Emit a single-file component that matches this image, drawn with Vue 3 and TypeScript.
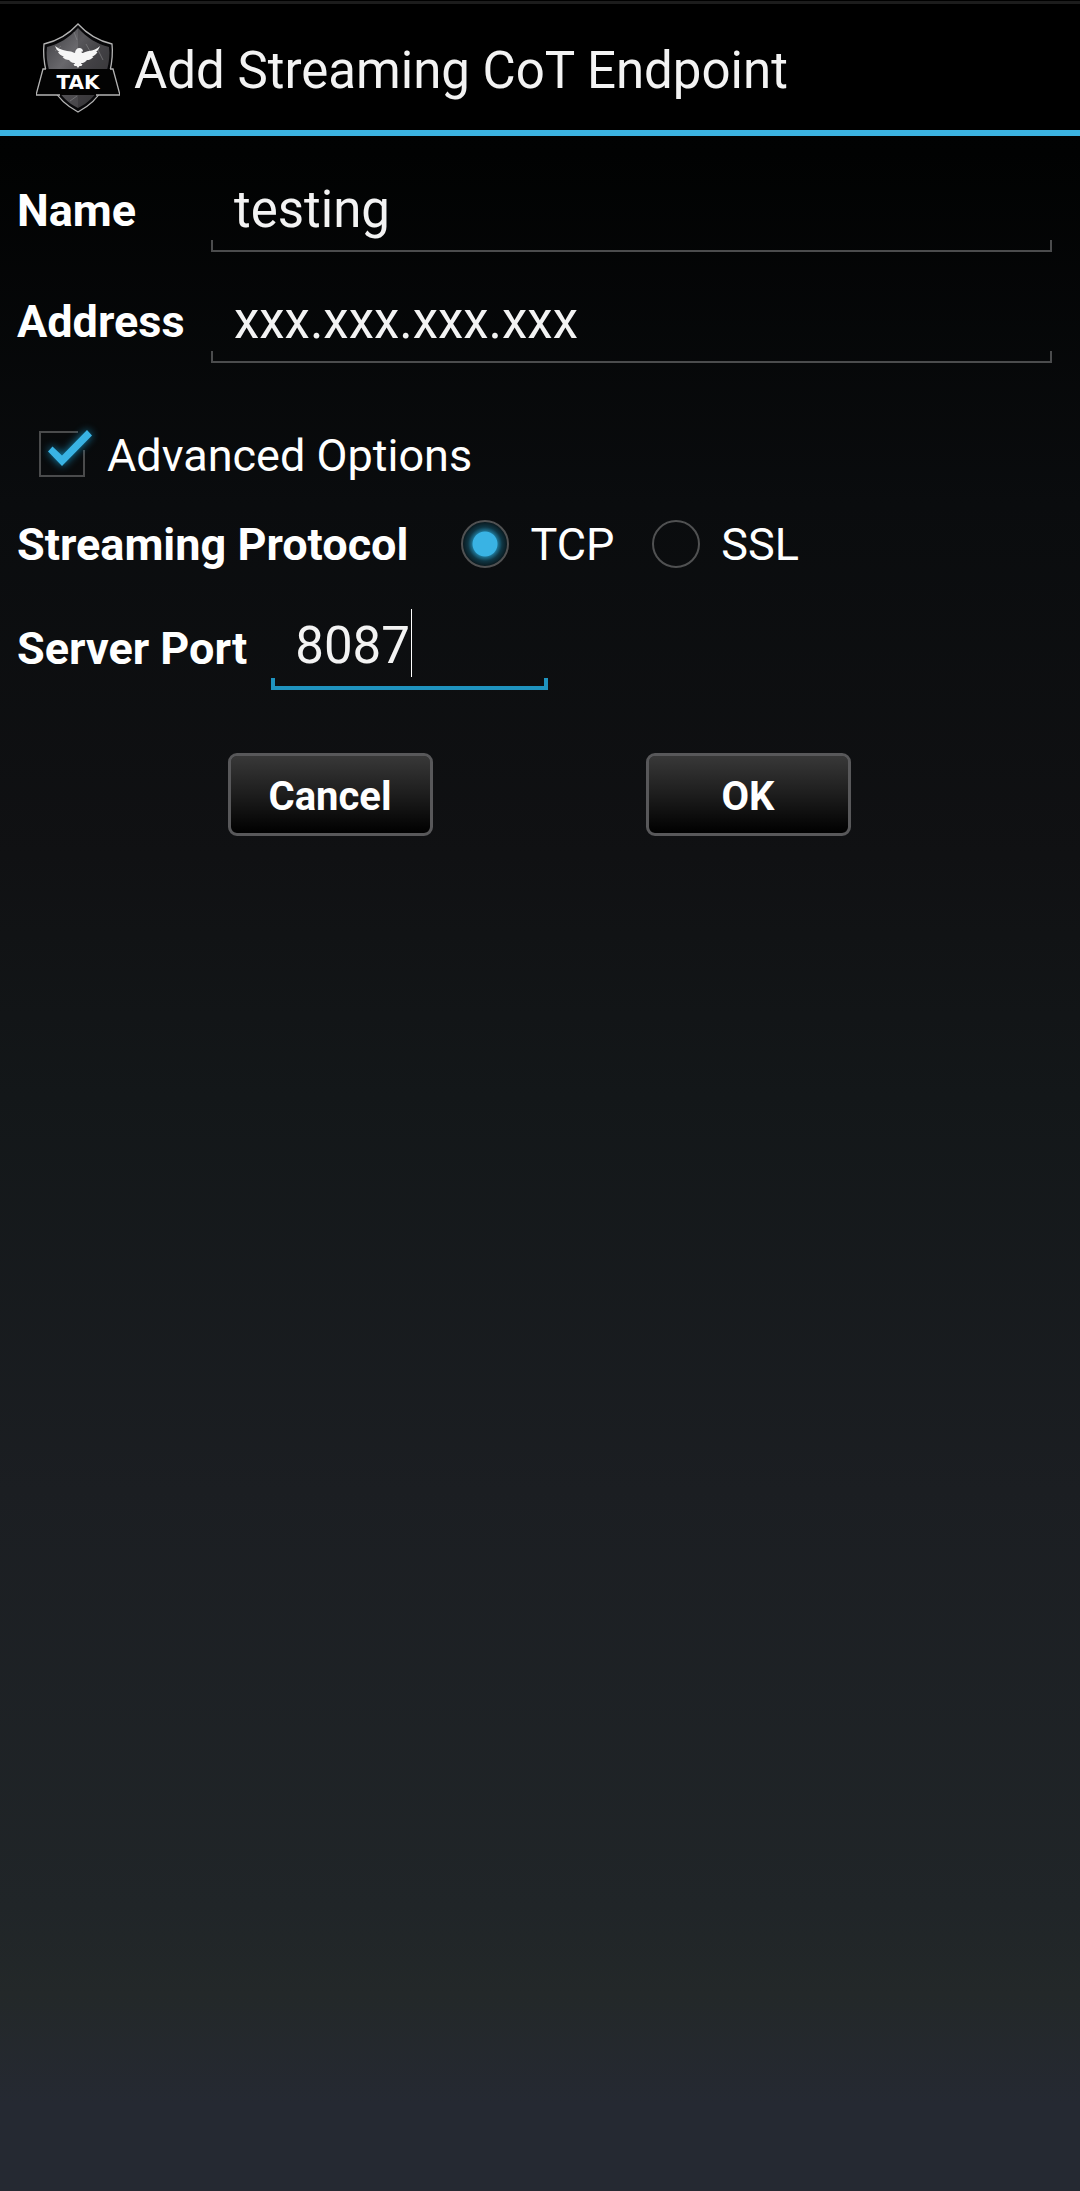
<script setup lang="ts">
import { ref } from 'vue'

const name = ref<string>('testing')
const address = ref<string>('xxx.xxx.xxx.xxx')
const advanced = ref<boolean>(true)
const protocol = ref<'TCP' | 'SSL'>('TCP')
const protocols: Array<'TCP' | 'SSL'> = ['TCP', 'SSL']
const port = ref<string>('8087')
</script>

<template>
  <div class="page">
    <header class="bar">
      <svg class="logo" viewBox="16 13 84 90" aria-hidden="true">
        <defs>
          <linearGradient id="steel" x1="0" y1="0" x2="1" y2="1">
            <stop offset="0" stop-color="#3c3c40" />
            <stop offset="0.35" stop-color="#69686c" />
            <stop offset="0.55" stop-color="#504f53" />
            <stop offset="1" stop-color="#3a383b" />
          </linearGradient>
        </defs>
        <path d="M58 14C48 25 37 31 24 34C23 43 24 52 26 61L33 78C38 88 47 96 58 102C69 96 78 88 83 78L90 61C92 52 93 43 92 34C79 31 68 25 58 14Z" fill="#08080a" stroke="#b4b4b4" stroke-width="1.3" />
        <path d="M58 18C49 28 39 34 27 37C26 45 27 52 29 60L36 77C41 86 48 93 58 98C68 93 75 86 80 77L87 60C89 52 90 45 89 37C77 34 67 28 58 18Z" fill="url(#steel)" />
        <path d="M58 18V98C68 93 75 86 80 77L87 60C89 52 90 45 89 37C77 34 67 28 58 18Z" fill="#000" opacity="0.16" />
        <path d="M54 22L57 30M35 41L41 36M66 34L71 43M78 40L83 50M50 91L57 86" stroke="#8a898c" stroke-width="0.6" />
        <path d="M23 59H93L100 85H16Z" fill="#030303" />
        <path d="M26 59H23L16 85H40M76 85H100L93 59H90" fill="none" stroke="#b4b4b4" stroke-width="1.3" />
        <path d="M35 36C40 40 46 41 51 41.500C53 42 54 43 55 43C55 40 57 38 59.500 38C61.500 38 63 39.500 63 41.500L61.500 41.500C61.500 42.500 62 43 63 43C65 41.500 67 41.500 69 41C73 40.500 77 39 80 36C79 39 77.500 41 76 42L77.500 42C76 44.500 74 46 72 46.500L73.500 47C71 49.500 69 50 67 50C65 52.500 63 53 61.500 53L61 54H62.500L61.500 56H59.500L58 58L56.500 56H54.500L53.500 54H55L54.500 53C51.500 53 50 51.500 49 50C46.500 50 44 49 42.500 47L44 46.500C41 46 39 44 38 42H39.500C37 40.500 36 38.500 35 36Z" fill="#f6f6f6" />
        <text x="58" y="79" text-anchor="middle" class="logo-text">TAK</text>
      </svg>
      <h1 class="title">Add Streaming CoT Endpoint</h1>
    </header>

    <form class="form" @submit.prevent>
      <div class="fields">
        <label class="label" for="name">Name</label>
        <input id="name" v-model="name" class="field" type="text" />
        <label class="label" for="address">Address</label>
        <input id="address" v-model="address" class="field" type="text" />
      </div>

      <label class="choice advanced">
        <span class="mark">
          <input v-model="advanced" class="native" type="checkbox" />
          <svg class="tick" viewBox="0 0 70 70" aria-hidden="true">
            <path v-if="!advanced" d="M10 12H54V56H10Z" class="outline" />
            <template v-else>
              <path d="M48 12H10V56H54V30" class="outline" />
              <path d="M18 31.500L22.500 26.500L32 35.500L57 10L62 15.500L32 46Z" class="check" />
            </template>
          </svg>
        </span>
        <span class="text">Advanced Options</span>
      </label>

      <div class="row protocol" role="radiogroup" aria-labelledby="protocol-label">
        <span id="protocol-label" class="label">Streaming Protocol</span>
        <div class="options">
          <label v-for="p in protocols" :key="p" class="choice option">
            <input v-model="protocol" class="radio" type="radio" name="protocol" :value="p" />
            <span class="text">{{ p }}</span>
          </label>
        </div>
      </div>

      <div class="row port">
        <label class="label" for="port">Server Port</label>
        <div class="port-box">
          <input id="port" v-model="port" class="field active" type="text" inputmode="numeric" />
          <span class="caret"></span>
        </div>
      </div>

      <div class="actions">
        <button class="button" type="button">Cancel</button>
        <button class="button" type="submit">OK</button>
      </div>
    </form>
  </div>
</template>

<style>
body {
  margin: 0;
  background: #000;
}
</style>

<style scoped>
.page {
  box-sizing: border-box;
  min-height: 100vh;
  font-family: Roboto, "Liberation Sans", sans-serif;
  font-size: 45px;
  color: #fff;
  background: linear-gradient(#000 0%, #010202 7%, #0a0c0e 23%, #101113 39%, #131719 50%, #1b1e22 68%, #202528 87%, #232829 91%, #252932 96%, #252932 100%);
}

.bar {
  box-sizing: border-box;
  display: flex;
  align-items: center;
  gap: 14px;
  height: 136px;
  padding: 6px 36px 0;
  border-bottom: 6px solid #3bb2e0;
  background: linear-gradient(#000 1px, #1c1c1c 1px, #1c1c1c 4px, #000 4px);
}

.logo {
  flex: none;
  width: 84px;
  height: 90px;
}

.logo-text {
  font: 700 20px "DejaVu Sans", sans-serif;
  fill: #fff;
}

.title {
  margin: 0;
  padding-top: 6px;
  font-size: 51px;
  font-weight: 400;
  line-height: 60px;
  color: #f3f3f3;
  white-space: nowrap;
}

.form {
  padding: 32px 28px 32px 17px;
}

.fields {
  display: grid;
  grid-template-columns: 194px 1fr;
  row-gap: 27px;
  align-items: center;
}

.label,
.text {
  padding-top: 2px;
  line-height: 54px;
  white-space: nowrap;
}

.label {
  font-weight: 700;
}

.field {
  --line: #4b4c4d;
  --thick: 2px;
  box-sizing: border-box;
  width: 100%;
  height: 84px;
  margin: 0;
  padding: 0 23px 2px;
  border: 0;
  border-radius: 0;
  outline: 0;
  font: inherit;
  font-size: 51px;
  color: #f3f3f3;
  background:
    linear-gradient(var(--line), var(--line)) 0 100% / 100% var(--thick) no-repeat,
    linear-gradient(var(--line), var(--line)) 0 100% / var(--thick) 12px no-repeat,
    linear-gradient(var(--line), var(--line)) 100% 100% / var(--thick) 12px no-repeat;
}

.field.active {
  --line: #1f93bf;
  --thick: 4px;
  padding: 0 24px 6px;
  caret-color: transparent;
}

.choice {
  display: flex;
  align-items: center;
}

.advanced {
  width: max-content;
  margin-top: 57px;
  padding-left: 13px;
  gap: 7px;
}

.mark {
  position: relative;
  width: 70px;
  height: 70px;
}

.native {
  position: absolute;
  inset: 0;
  width: 100%;
  height: 100%;
  margin: 0;
  opacity: 0;
}

.tick {
  display: block;
  width: 70px;
  height: 70px;
  overflow: visible;
}

.outline {
  fill: none;
  stroke: #4a4b4c;
  stroke-width: 2px;
}

.check {
  fill: #39b3e4;
  filter: drop-shadow(0 0 4px #1489b5);
}

.row {
  display: flex;
  align-items: center;
}

.protocol {
  margin-top: 26px;
  gap: 53px;
}

.options {
  display: flex;
  gap: 38px;
}

.option {
  gap: 21px;
}

.radio {
  appearance: none;
  box-sizing: border-box;
  flex: none;
  width: 48px;
  height: 48px;
  margin: 0;
  border: 2px solid #505152;
  border-radius: 50%;
}

.radio:checked {
  background: radial-gradient(circle, #39b3e4 12px, #1d708f 13px, #0f3644 17px, #0a1a20 22px);
}

.port {
  margin-top: 34px;
  gap: 24px;
}

.port-box {
  position: relative;
  width: 277px;
}

.port-box .field {
  display: block;
}

.caret {
  position: absolute;
  left: 140px;
  top: 3px;
  width: 1px;
  height: 68px;
  background: #fff;
}

.actions {
  display: flex;
  justify-content: center;
  gap: 213px;
  margin-top: 63px;
  padding-left: 9px;
}

.button {
  box-sizing: border-box;
  width: 205px;
  height: 83px;
  padding: 4px 0 0;
  border: 3px solid #58585a;
  border-radius: 9px;
  font: inherit;
  font-size: 40px;
  font-weight: 700;
  color: #fff;
  background: linear-gradient(#383838, #1d1d1d 50%, #000) padding-box;
}
</style>
